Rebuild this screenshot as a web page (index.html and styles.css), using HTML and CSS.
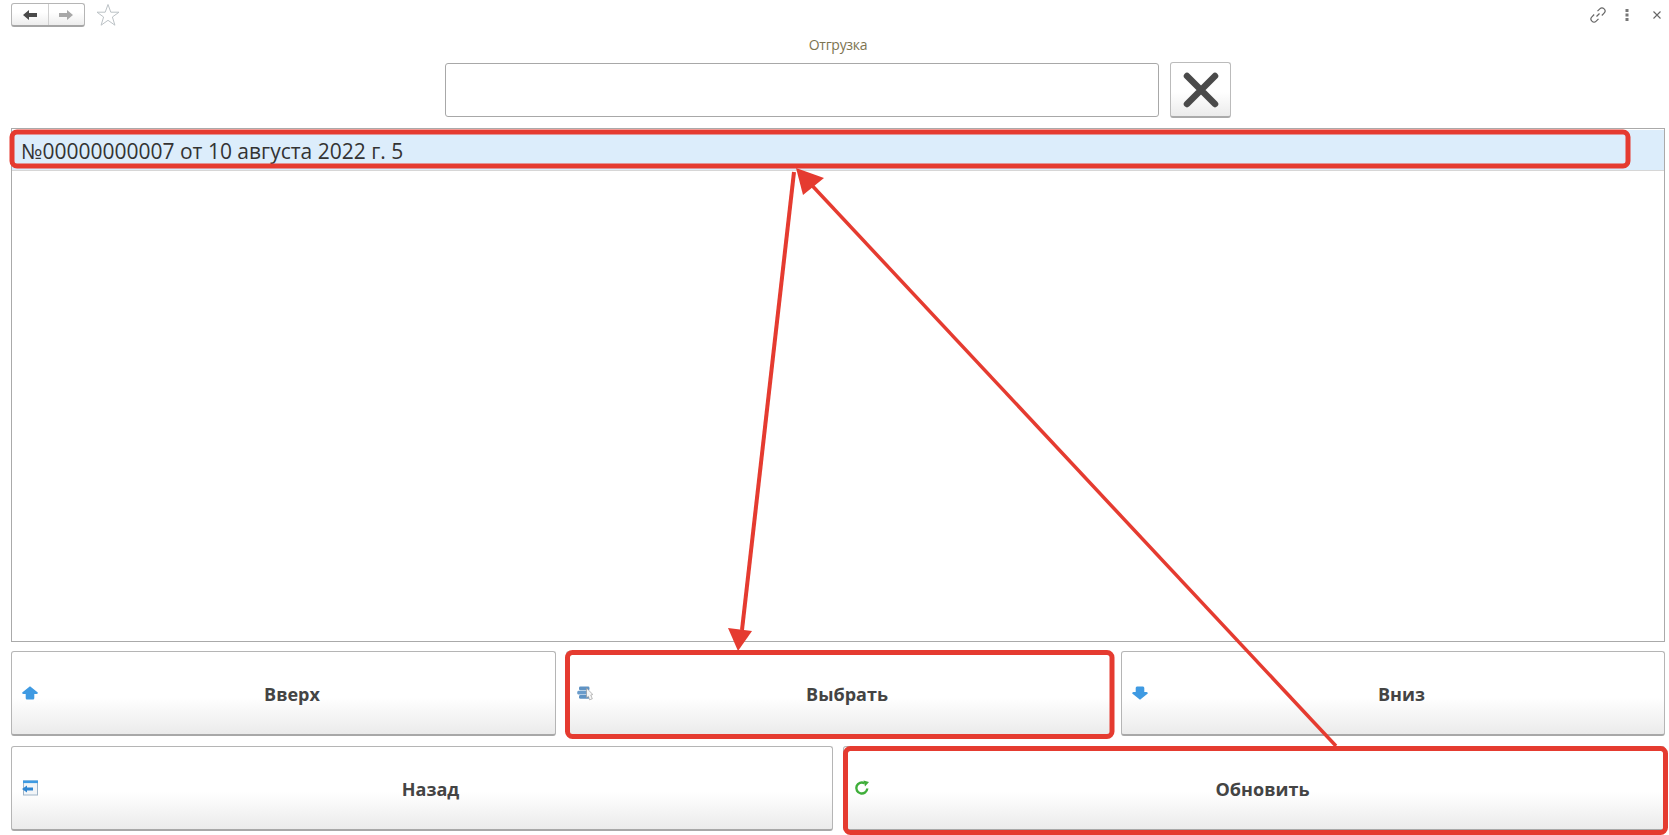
FILE: index.html
```html
<!DOCTYPE HTML>
<html>
	<head>
		<title>Отгрузка</title>
		<meta charset="utf-8">
		<link rel="stylesheet" href="styles.css">
	</head>
	<body>
	<div class="page">
		<div class="toolbar">
			<div class="nav-group">
				<button class="nav-btn">
					<svg width="16" height="12" viewBox="0 0 16 12"><path d="M1 6 L7 1 V4 H15 V8 H7 V11 Z" fill="#4a4a4a"/></svg>
				</button>
				<button class="nav-btn">
					<svg width="16" height="12" viewBox="0 0 16 12"><path d="M15 6 L9 1 V4 H1 V8 H9 V11 Z" fill="#a8a8a8"/></svg>
				</button>
			</div>
			<svg class="star" width="24" height="24" viewBox="0 0 24 24"><path d="M12 1.5 L14.8 9.2 H23 L16.4 14 L18.9 22.2 L12 17.3 L5.1 22.2 L7.6 14 L1 9.2 H9.2 Z" fill="#fff" stroke="#bcc2c6" stroke-width="1"/></svg>
			<div class="window-tools">
				<svg width="16" height="16" viewBox="0 0 16 16" fill="none" stroke="#666" stroke-width="1.2"><path d="M6.5 9.5 L9.5 6.5"/><path d="M7.5 4.2 L9.8 1.9 a2.6 2.6 0 0 1 4.3 4.3 L11.8 8.5"/><path d="M8.5 11.8 L6.2 14.1 a2.6 2.6 0 0 1 -4.3 -4.3 L4.2 7.5"/></svg>
				<svg class="dots" width="4" height="12" viewBox="0 0 4 12"><rect x="0.5" y="0" width="3" height="3" fill="#777"/><rect x="0.5" y="4.5" width="3" height="3" fill="#777"/><rect x="0.5" y="9" width="3" height="3" fill="#777"/></svg>
				<svg class="close" width="8" height="8" viewBox="0 0 8 8"><path d="M0.5 0.5 L7.5 7.5 M7.5 0.5 L0.5 7.5" stroke="#666" stroke-width="1.1"/></svg>
			</div>
		</div>

		<div class="form-title">Отгрузка</div>

		<div class="search-row">
			<div class="search-input"></div>
			<button class="clear-btn">
				<svg width="36" height="36" viewBox="0 0 36 36"><path d="M4 4 L32 32 M32 4 L4 32" stroke="#4a4a4a" stroke-width="6.5" stroke-linecap="round"/></svg>
			</button>
		</div>

		<div class="list">
			<div class="list-row">№00000000007 от 10 августа 2022 г. 5</div>
		</div>

		<div class="btn-row first">
			<button class="cmd-btn">
				<svg width="16" height="14" viewBox="0 0 16 14"><path d="M8 0.3 L15.8 6.5 Q16 8 14.5 8 H12.3 V12 Q12.3 13.5 11 13.5 H5 Q3.7 13.5 3.7 12 V8 H1.5 Q0 8 0.2 6.5 Z" fill="#3f9ae2"/></svg>
				<span>Вверх</span>
			</button>
			<button class="cmd-btn">
				<svg width="16" height="16" viewBox="0 0 16 16">
					<rect x="2" y="1.5" width="10.5" height="3.8" rx="1.4" fill="#5f93c4"/>
					<rect x="0.3" y="5.8" width="12" height="3.8" rx="1.4" fill="#6a9ccb"/>
					<rect x="2" y="10" width="10.5" height="3.8" rx="1.4" fill="#5f93c4"/>
					<path d="M9.5 3 L15.8 9.5 L13.8 10 L15.3 13.8 L12.6 14.8 L11.4 11.4 L9.5 12.8 Z" fill="#f6f6f6" stroke="#8f8f8f" stroke-width="0.6"/>
				</svg>
				<span>Выбрать</span>
			</button>
			<button class="cmd-btn">
				<svg width="16" height="14" viewBox="0 0 16 14"><path d="M8 13.7 L15.8 7.5 Q16 6 14.5 6 H12.3 V2 Q12.3 0.5 11 0.5 H5 Q3.7 0.5 3.7 2 V6 H1.5 Q0 6 0.2 7.5 Z" fill="#3f9ae2"/></svg>
				<span>Вниз</span>
			</button>
		</div>
		<div class="btn-row">
			<button class="cmd-btn">
				<svg width="16" height="16" viewBox="0 0 16 16">
					<rect x="1.5" y="1" width="14" height="14" fill="#f2f5f8" stroke="#9fb4c8" stroke-width="1"/>
					<rect x="1" y="0.5" width="15" height="2.6" fill="#3f9ae2"/>
					<path d="M0 9 L5 5.5 V7.5 H11 V10.5 H5 V12.5 Z" fill="#2f86d2"/>
				</svg>
				<span>Назад</span>
			</button>
			<button class="cmd-btn">
				<svg width="16" height="16" viewBox="0 0 16 16" fill="none"><path d="M13.3 8.5 A5.5 5.5 0 1 1 10.5 3.2" stroke="#3fae3a" stroke-width="2.4"/><path d="M9.5 0.5 L15 2 L11 6.5 Z" fill="#3fae3a"/></svg>
				<span>Обновить</span>
			</button>
		</div>
	</div>

	<svg class="marks" width="1669" height="835" viewBox="0 0 1669 835" fill="none" stroke="#e53b30">
		<rect x="12" y="132" width="1616" height="34" rx="5" stroke-width="5"/>
		<rect x="567.5" y="652.5" width="544.5" height="84" rx="5" stroke-width="5"/>
		<rect x="845.5" y="748.5" width="820" height="84" rx="5" stroke-width="5"/>
		<path d="M794 172 L742 630" stroke-width="4"/>
		<path d="M1336 746 L806 179" stroke-width="3.5"/>
		<path d="M796 168 L824 178 L803 195 Z" fill="#e53b30" stroke="none"/>
		<path d="M738 651 L728 628 L752 631 Z" fill="#e53b30" stroke="none"/>
	</svg>
	</body>
</html>
```

FILE: styles.css
```css
html{
	height: 100%;
}

body{
	margin: 0;
	height: 835px;
	position: relative;
	overflow: hidden;
	background: white;
	font-family: "Open Sans", "Noto Sans", sans-serif;
	color: #444;
}

.page{
	display: flex;
	flex-direction: column;
	padding: 3px 4px 0 11px;
}

.toolbar{
	display: flex;
	align-items: center;
	height: 24px;
}

.nav-group{
	display: flex;
	width: 74px;
	height: 24px;
	box-sizing: border-box;
	border: 1px solid #b5b5b5;
	border-bottom: 2px solid #a5a5a5;
	border-radius: 3px;
	background: linear-gradient(#fff 40%, #ededed);
}

.nav-btn{
	flex: 1;
	display: flex;
	align-items: center;
	justify-content: center;
	padding: 0;
	border: none;
	background: none;
}

.nav-btn + .nav-btn{
	border-left: 1px solid #d0d0d0;
}

.star{
	margin-left: 11px;
}

.window-tools{
	display: flex;
	align-items: center;
	margin-left: auto;
	margin-right: 4px;
}

.dots{
	margin-left: 19px;
}

.close{
	margin-left: 24px;
}

.form-title{
	margin-top: 9px;
	height: 18px;
	line-height: 18px;
	font-size: 14px;
	letter-spacing: -0.3px;
	text-align: center;
	color: #7d7450;
}

.search-row{
	display: flex;
	justify-content: center;
	align-items: center;
	gap: 11px;
	margin-top: 8px;
}

.search-input{
	width: 714px;
	height: 54px;
	box-sizing: border-box;
	border: 1px solid #a8a8a8;
	border-radius: 3px;
	background: white;
}

.clear-btn{
	display: flex;
	align-items: center;
	justify-content: center;
	width: 61px;
	height: 56px;
	padding: 0;
	box-sizing: border-box;
	border: 1px solid #bbb;
	border-bottom: 2px solid #aaa;
	border-radius: 3px;
	background: linear-gradient(#fff 55%, #ebebeb);
}

.list{
	margin-top: 10px;
	height: 514px;
	box-sizing: border-box;
	border: 1px solid #aaa;
	padding-top: 1px;
}

.list-row{
	height: 41px;
	box-sizing: border-box;
	padding-left: 9px;
	line-height: 43px;
	font-size: 21px;
	color: #333;
	background: #dcedfb;
	border-bottom: 1px solid #d6d6d6;
}

.btn-row{
	display: flex;
	gap: 10px;
	margin-top: 10px;
}

.btn-row.first{
	margin-top: 9px;
}

.btn-row.first .cmd-btn:last-child{
	flex: 0 0 544px;
}

.cmd-btn{
	flex: 1;
	display: flex;
	align-items: center;
	height: 85px;
	padding: 0 0 0 10px;
	box-sizing: border-box;
	border: 1px solid #b5b5b5;
	border-bottom: 2px solid #a8a8a8;
	border-radius: 3px;
	background: linear-gradient(#fff 55%, #ebebeb);
	font-family: "Open Sans", "Noto Sans", sans-serif;
	font-size: 18px;
	font-weight: bold;
	color: #444;
}

.cmd-btn svg{
	flex: none;
}

.cmd-btn span{
	flex: 1;
	padding: 2px 9px 0 0;
	text-align: center;
}

/* red annotation drawn over the screen */
.marks{
	position: absolute;
	left: 0;
	top: 0;
	pointer-events: none;
}
```
